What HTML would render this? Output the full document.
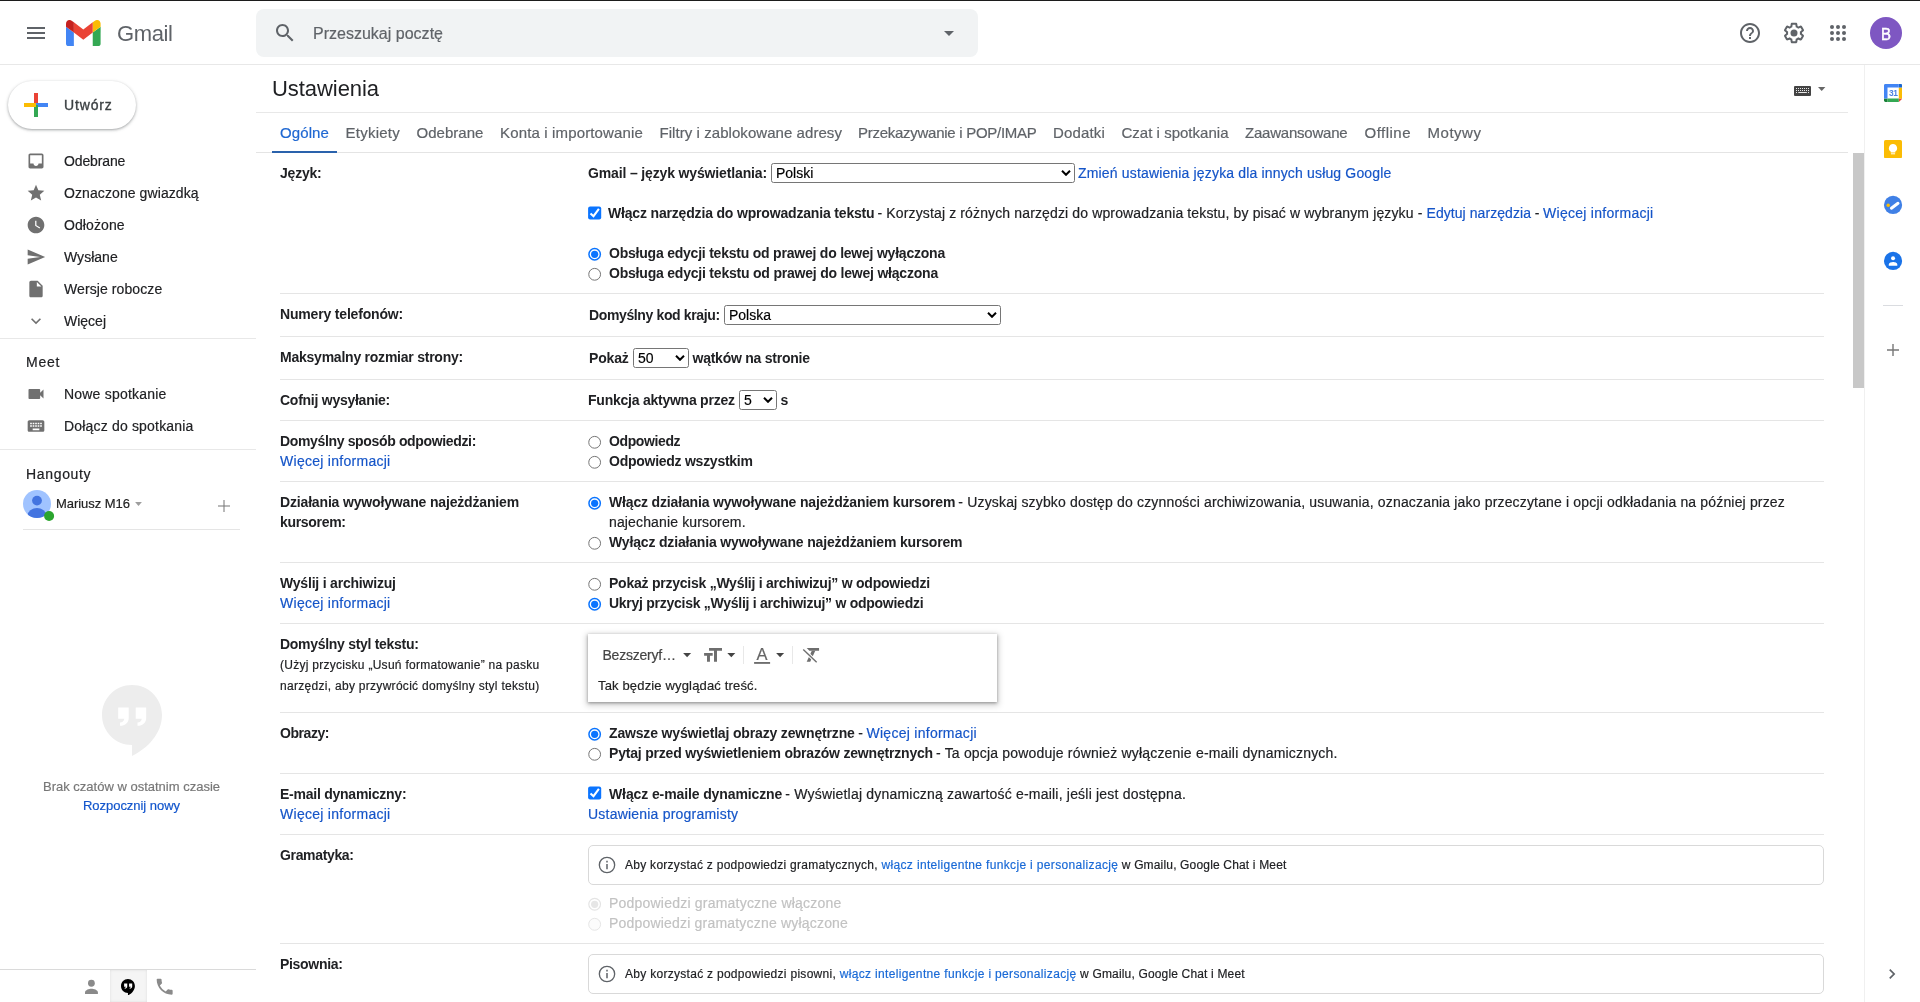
<!DOCTYPE html>
<html lang="pl">
<head>
<meta charset="utf-8">
<title>Ustawienia - Gmail</title>
<style>
html,body{margin:0;padding:0;}
body{width:1920px;height:1002px;position:relative;overflow:hidden;background:#fff;font-family:"Liberation Sans",sans-serif;color:#202124;}
.t{position:absolute;white-space:nowrap;font-family:"Liberation Sans",sans-serif;}
.a{position:absolute;}
.hl{position:absolute;height:1px;background:#e4e4e4;}
.row{position:absolute;left:280px;width:1544px;height:1px;background:#e5e5e5;}
.ic{position:absolute;fill:#5f6368;}
.sel{position:absolute;box-sizing:border-box;border:1px solid #767676;border-radius:2.5px;background:#fff;}
.sel svg{position:absolute;right:3px;top:50%;margin-top:-3px;}
.rad{position:absolute;box-sizing:border-box;width:13px;height:13px;border-radius:50%;border:1px solid #767676;background:#fff;}
.rad.on{border:1.5px solid #0075ff;}
.rad.on:after{content:"";position:absolute;left:1.300px;top:1.300px;width:7.400px;height:7.400px;border-radius:50%;background:#0075ff;}
.rad.dis{border-color:#d9d9d9;background:#fbfbfb;}
.rad.dis.on{border:1.5px solid #d4d4d4;}
.rad.dis.on:after{background:#d4d4d4;}
.chk{position:absolute;width:13px;height:13px;border-radius:2px;background:#0075ff;}
.info{position:absolute;box-sizing:border-box;left:588px;width:1236px;height:40px;border:1px solid #d9d9d9;border-radius:5px;background:#fff;}
.pre{white-space:pre;}
.avB{width:32px;text-align:center;font-weight:400;transform:scaleX(.88);-webkit-text-stroke:0.5px #fff;}
.nv{fill:#707070;}
.md{-webkit-text-stroke:0.350px currentColor;}
.md2{-webkit-text-stroke:0.200px currentColor;}
#texts{position:absolute;left:0;top:0;width:1920px;height:1002px;will-change:transform;}
.r{-webkit-text-stroke:0.180px currentColor;}

</style>
</head>
<body>
<!-- top chrome line + header -->
<div class="a" style="left:0;top:0;width:1920px;height:1px;background:#1c1c1c"></div>
<div class="hl" style="left:0;top:64px;width:1920px;background:#e8e8e8"></div>
<svg class="ic" style="left:24px;top:21px" width="24" height="24" viewBox="0 0 24 24"><path d="M3 18h18v-2H3v2zm0-5h18v-2H3v2zm0-7v2h18V6H3z"/></svg>
<svg class="a" style="left:66px;top:20px" width="34.600" height="26" viewBox="52 42 88 66" preserveAspectRatio="none"><path fill="#4285f4" d="M58 108h14V74L52 59v43c0 3.32 2.69 6 6 6"/><path fill="#34a853" d="M120 108h14c3.32 0 6-2.69 6-6V59l-20 15"/><path fill="#fbbc04" d="M120 48v26l20-15v-8c0-7.42-8.47-11.65-14.4-7.2"/><path fill="#ea4335" d="M72 74V48l24 18 24-18v26L96 92"/><path fill="#c5221f" d="M52 51v8l20 15V48l-5.6-4.2c-5.94-4.45-14.4-.22-14.4 7.2"/></svg>
<div class="a" style="left:256px;top:9px;width:722px;height:48px;border-radius:8px;background:#f1f3f4"></div>
<svg class="ic" style="left:273px;top:21px" width="24" height="24" viewBox="0 0 24 24"><path d="M15.5 14h-.79l-.28-.27C15.41 12.59 16 11.11 16 9.5 16 5.91 13.09 3 9.5 3S3 5.91 3 9.5 5.91 16 9.5 16c1.61 0 3.09-.59 4.23-1.57l.27.28v.79l5 4.99L20.49 19l-4.99-5zm-6 0C7.01 14 5 11.99 5 9.5S7.01 5 9.5 5 14 7.01 14 9.5 11.99 14 9.5 14z"/></svg>
<svg class="ic" style="left:937px;top:21px" width="24" height="24" viewBox="0 0 24 24"><path d="M7 10l5 5 5-5z"/></svg>
<svg class="ic" style="left:1738px;top:21px" width="24" height="24" viewBox="0 0 24 24"><path d="M11 18h2v-2h-2v2zm1-16C6.48 2 2 6.48 2 12s4.48 10 10 10 10-4.48 10-10S17.52 2 12 2zm0 18c-4.41 0-8-3.59-8-8s3.59-8 8-8 8 3.59 8 8-3.59 8-8 8zm0-14c-2.21 0-4 1.79-4 4h2c0-1.1.9-2 2-2s2 .9 2 2c0 2-3 1.75-3 5h2c0-2.25 3-2.5 3-5 0-2.21-1.79-4-4-4z"/></svg>
<svg class="ic" style="left:1782px;top:21px" width="24" height="24" viewBox="0 0 24 24"><path d="M13.85 22.25h-3.7c-.74 0-1.36-.54-1.45-1.27l-.27-1.89c-.27-.14-.53-.29-.79-.46l-1.8.72c-.7.26-1.47-.03-1.81-.65L2.2 15.53c-.35-.66-.2-1.44.36-1.88l1.53-1.19c-.01-.15-.02-.3-.02-.46 0-.15.01-.31.02-.46l-1.52-1.19c-.59-.45-.74-1.26-.37-1.88l1.85-3.19c.34-.62 1.11-.9 1.79-.63l1.81.73c.26-.17.52-.32.78-.46l.27-1.91c.09-.7.71-1.25 1.44-1.25h3.7c.74 0 1.36.54 1.45 1.27l.27 1.89c.27.14.53.29.79.46l1.8-.72c.71-.26 1.48.03 1.82.65l1.84 3.18c.36.66.2 1.44-.36 1.88l-1.52 1.19c.01.15.02.3.02.46s-.01.31-.02.46l1.52 1.19c.56.45.72 1.23.37 1.86l-1.86 3.22c-.34.62-1.11.9-1.8.63l-1.8-.72c-.26.17-.52.32-.78.46l-.27 1.91c-.1.68-.72 1.22-1.46 1.22zm-3.23-2h2.76l.37-2.55.53-.22c.44-.18.88-.44 1.34-.78l.45-.34 2.38.96 1.38-2.4-2.03-1.58.07-.56c.03-.26.06-.51.06-.78s-.03-.53-.06-.78l-.07-.56 2.03-1.58-1.39-2.4-2.39.96-.45-.35c-.42-.32-.87-.58-1.33-.77l-.52-.22-.37-2.55h-2.76l-.37 2.55-.53.21c-.44.19-.88.44-1.34.79l-.45.33-2.38-.95-1.39 2.39 2.03 1.58-.07.56a7 7 0 0 0-.06.79c0 .26.02.53.06.78l.07.56-2.03 1.58 1.38 2.4 2.39-.96.45.35c.43.33.86.58 1.33.77l.53.22.38 2.55z"/><circle cx="12" cy="12" r="3.5"/></svg>
<svg class="ic" style="left:1826px;top:21px" width="24" height="24" viewBox="0 0 24 24"><circle cx="6" cy="6" r="2"/><circle cx="12" cy="6" r="2"/><circle cx="18" cy="6" r="2"/><circle cx="6" cy="12" r="2"/><circle cx="12" cy="12" r="2"/><circle cx="18" cy="12" r="2"/><circle cx="6" cy="18" r="2"/><circle cx="12" cy="18" r="2"/><circle cx="18" cy="18" r="2"/></svg>
<div class="a" style="left:1870px;top:17px;width:32px;height:32px;border-radius:50%;background:#7e57c2"></div>

<!-- left sidebar -->
<div class="a" style="left:8px;top:81px;width:128px;height:48px;border-radius:24px;background:#fff;box-shadow:0 1px 2px 0 rgba(60,64,67,.3),0 1px 3px 1px rgba(60,64,67,.15)"></div>
<svg class="a" style="left:24px;top:93px" width="24" height="24" viewBox="0 0 24 24"><path fill="#ea4335" d="M10 0h4v10h-4z"/><path fill="#34a853" d="M10 14h4v10h-4z"/><path fill="#fbbc04" d="M0 10h10v4H0z"/><path fill="#4285f4" d="M14 10h10v4H14z"/><path fill="#ea4335" d="M10 10h4v2h-4z"/><path fill="#4285f4" d="M12 10h2v4h-2z"/><path fill="#34a853" d="M10 12h4v2h-4z"/><path fill="#fbbc04" d="M10 10h2v4h-2z"/></svg>
<svg class="ic nv" style="left:26px;top:151px" width="20" height="20" viewBox="0 0 24 24"><path d="M19 3H4.99c-1.11 0-1.98.9-1.98 2L3 19c0 1.1.88 2 1.99 2H19c1.1 0 2-.9 2-2V5c0-1.1-.9-2-2-2zm0 12h-4c0 1.66-1.35 3-3 3s-3-1.34-3-3H4.99V5H19v10z"/></svg>
<svg class="ic nv" style="left:26px;top:183px" width="20" height="20" viewBox="0 0 24 24"><path d="M12 17.27L18.18 21l-1.64-7.03L22 9.24l-7.19-.61L12 2 9.19 8.63 2 9.24l5.46 4.73L5.82 21z"/></svg>
<svg class="ic nv" style="left:26px;top:215px" width="20" height="20" viewBox="0 0 24 24"><path d="M12 2C6.5 2 2 6.5 2 12s4.5 10 10 10 10-4.5 10-10S17.5 2 12 2zm4.2 14.2L11 13V7h1.5v5.2l4.5 2.7-.8 1.3z"/></svg>
<svg class="ic nv" style="left:26px;top:247px" width="20" height="20" viewBox="0 0 24 24"><path d="M2.01 21L23 12 2.01 3 2 10l15 2-15 2z"/></svg>
<svg class="ic nv" style="left:26px;top:279px" width="20" height="20" viewBox="0 0 24 24"><path d="M6 2c-1.1 0-1.99.9-1.99 2L4 20c0 1.1.89 2 1.99 2H18c1.1 0 2-.9 2-2V8l-6-6H6zm7 7V3.5L18.5 9H13z"/></svg>
<svg class="ic nv" style="left:26px;top:311px" width="20" height="20" viewBox="0 0 24 24"><path d="M16.59 8.59L12 13.17 7.41 8.59 6 10l6 6 6-6z"/></svg>
<div class="hl" style="left:0;top:338px;width:256px;background:#e8e8e8"></div>
<svg class="ic nv" style="left:26px;top:384px" width="20" height="20" viewBox="0 0 24 24"><path d="M17 10.5V7c0-.55-.45-1-1-1H4c-.55 0-1 .45-1 1v10c0 .55.45 1 1 1h12c.55 0 1-.45 1-1v-3.5l4 4v-11l-4 4z"/></svg>
<svg class="ic nv" style="left:26px;top:416px" width="20" height="20" viewBox="0 0 24 24"><path d="M20 5H4c-1.1 0-1.99.9-1.99 2L2 17c0 1.1.9 2 2 2h16c1.1 0 2-.9 2-2V7c0-1.1-.9-2-2-2zm-9 3h2v2h-2V8zm0 3h2v2h-2v-2zM8 8h2v2H8V8zm0 3h2v2H8v-2zm-1 2H5v-2h2v2zm0-3H5V8h2v2zm9 7H8v-2h8v2zm0-4h-2v-2h2v2zm0-3h-2V8h2v2zm3 3h-2v-2h2v2zm0-3h-2V8h2v2z"/></svg>
<div class="hl" style="left:0;top:449px;width:256px;background:#e8e8e8"></div>
<!-- hangouts avatar -->
<svg class="a" style="left:23px;top:490px" width="28" height="28" viewBox="0 0 28 28"><defs><clipPath id="avc"><circle cx="14" cy="14" r="14"/></clipPath></defs><circle cx="14" cy="14" r="14" fill="#a0c3ff"/><g clip-path="url(#avc)" fill="#4374e0"><circle cx="14" cy="10.6" r="4.9"/><ellipse cx="14" cy="25.300" rx="9.300" ry="7.200"/></g></svg>
<svg class="a" style="left:43px;top:510px" width="12" height="12" viewBox="0 0 12 12"><circle cx="6.100" cy="6" r="5" fill="#2ba52e"/></svg>
<svg class="a" style="left:134px;top:498px" width="10" height="10" viewBox="0 0 10 10"><path fill="#9e9e9e" d="M1.100 3.900h6.800L4.500 8z"/></svg>
<svg class="a" style="left:218px;top:500px" width="12" height="12" viewBox="0 0 12 12"><path fill="#757575" d="M5.5 0h1v5.5H12v1H6.5V12h-1V6.500H0v-1h5.500z"/></svg>
<div class="hl" style="left:23px;top:529px;width:217px;background:#e5e5e5"></div>
<!-- hangouts bubble -->
<svg class="a" style="left:102px;top:685px" width="60" height="71" viewBox="0 0 60 71"><path fill="#ededed" d="M30 0C13.400 0 0 13.400 0 30c0 16.600 13.400 30 30 30v10.900c16-7.500 30-23 30-40.900C60 13.400 46.600 0 30 0z"/><path fill="#fff" d="M16.200 22.400H26.700V33C26.700 37.500 23.500 40.800 18 40.800V37.600C20.500 37.400 22 35.800 22.300 33.700H16.200ZM33.700 22.400H44.200V33C44.200 37.500 41 40.800 35.500 40.800V37.600C38 37.400 39.500 35.800 39.800 33.700H33.700Z"/></svg>
<div class="hl" style="left:0;top:969px;width:256px;background:#dadada"></div>
<div class="a" style="left:110px;top:970px;width:37px;height:32px;background:#f5f5f5;box-shadow:inset 0 0 3px rgba(0,0,0,.1)"></div>
<svg class="a" style="left:84px;top:978px" width="16" height="18" viewBox="84 978 16 18"><circle cx="91.400" cy="983.250" r="3.400" fill="#8a8a8a"/><path fill="#8a8a8a" d="M85 994v-1.600c0-2.600 4.300-3.700 6.450-3.700s6.450 1.100 6.450 3.700v1.600z"/></svg>
<svg class="a" style="left:121.100px;top:978.800px" width="13.900" height="16.450" viewBox="0 0 60 71"><path fill="#000" d="M30 0C13.400 0 0 13.400 0 30c0 16.600 13.400 30 30 30v10.900c16-7.500 30-23 30-40.900C60 13.400 46.600 0 30 0z"/><path fill="#fff" d="M13.500 19.900H27V32.500C27 38 23 41.800 16 41.800V37.800C19 37.500 21 35.800 21.500 33.400H13.500ZM34.900 19.900H48.400V32.500C48.400 38 44.400 41.800 37.400 41.800V37.800C40.400 37.500 42.400 35.800 42.900 33.400H34.900Z"/></svg>
<svg class="a" style="left:154.200px;top:976.300px" width="21.300" height="21.300" viewBox="0 0 24 24"><path fill="#8a8a8a" d="M6.620 10.790c1.440 2.830 3.760 5.140 6.590 6.590l2.200-2.200c.27-.27.67-.36 1.020-.24 1.120.37 2.330.57 3.570.57.550 0 1 .45 1 1V20c0 .55-.45 1-1 1-9.390 0-17-7.610-17-17 0-.55.450-1 1-1h3.500c.55 0 1 .45 1 1 0 1.250.2 2.450.57 3.570.11.350.03.740-.25 1.020l-2.200 2.200z"/></svg>

<!-- main -->
<div class="hl" style="left:256px;top:112px;width:1592px;background:#e8e8e8"></div>
<div class="hl" style="left:256px;top:152px;width:1592px;background:#e4e4e4"></div>
<div class="a" style="left:272px;top:151px;width:65px;height:2px;background:#2a62ac"></div>
<svg class="a" style="left:1794px;top:86px" width="17" height="10" viewBox="0 0 17 10"><rect x="0" y="0" width="17" height="10" rx="1" fill="#444"/><g fill="#e8e8e8"><rect x="2" y="2" width="1" height="1"/><rect x="2" y="4" width="1" height="1"/><rect x="4" y="2" width="1" height="1"/><rect x="4" y="4" width="1" height="1"/><rect x="6" y="2" width="1" height="1"/><rect x="6" y="4" width="1" height="1"/><rect x="8" y="2" width="1" height="1"/><rect x="8" y="4" width="1" height="1"/><rect x="10" y="2" width="1" height="1"/><rect x="10" y="4" width="1" height="1"/><rect x="12" y="2" width="1" height="1"/><rect x="12" y="4" width="1" height="1"/><rect x="14" y="2" width="1" height="1"/><rect x="14" y="4" width="1" height="1"/><rect x="2" y="6" width="1" height="1"/><rect x="4.250" y="6" width="8.600" height="1"/><rect x="14" y="6" width="1" height="1"/></g></svg>
<svg class="a" style="left:1818.200px;top:86.600px" width="7.400" height="4" viewBox="0 0 7.400 4"><path fill="#666" d="M0 0h7.400L3.700 4z"/></svg>
<!-- scrollbar -->
<div class="a" style="left:1853px;top:153px;width:11px;height:235px;background:#c8c8c8"></div>
<!-- right panel -->
<div class="a" style="left:1864px;top:65px;width:1px;height:937px;background:#f0f0f0"></div>
<svg class="a" style="left:1883.500px;top:84px;will-change:transform" width="18.400" height="18" viewBox="0 0 184 180"><path fill="#fff" d="M35 35h113v110H35z"/><path fill="#ea4335" d="M148 180l36-35h-36z"/><path fill="#fbbc04" d="M148 35h36v110h-36z"/><path fill="#34a853" d="M35 145h113v35H35z"/><path fill="#188038" d="M0 145v21c0 7.700 6.300 14 14 14h21v-35z"/><path fill="#1967d2" d="M184 35V14c0-7.700-6.300-14-14-14h-22v35z"/><path fill="#4285f4" d="M14 0C6.300 0 0 6.300 0 14v131h35V35h113V0z"/><text x="92" y="119" font-family="Liberation Sans, sans-serif" font-size="84" font-weight="700" fill="#4d7fe0" text-anchor="middle" letter-spacing="-4">31</text></svg>
<svg class="a" style="left:1884px;top:140px" width="18" height="18.400" viewBox="0 0 18 18.400"><rect width="18" height="18.400" rx="1.600" fill="#fbbc04"/><path fill="#fff" d="M9 4a4.100 4.100 0 0 0-2.300 7.500v.900h4.600v-.900A4.100 4.100 0 0 0 9 4z"/><rect x="6.900" y="13.100" width="4.200" height="1.300" fill="#fef0c3"/></svg>
<svg class="a" style="left:1883px;top:195px" width="20" height="20" viewBox="0 0 20 20"><circle cx="10.050" cy="9.950" r="9.100" fill="#4080e6"/><path d="M8.400 13.200l6.600-4.900" stroke="#fff" stroke-width="3" stroke-linecap="round"/><circle cx="5.200" cy="10.200" r="1.700" fill="#fbbc04"/></svg>
<svg class="a" style="left:1883px;top:251px" width="20" height="20" viewBox="0 0 20 20"><circle cx="10.050" cy="9.950" r="9.100" fill="#1a73e8"/><circle cx="10.050" cy="7.200" r="2" fill="#fff"/><path fill="#fff" d="M5.800 14.700v-1.100c0-1.800 2.700-2.500 4.250-2.500s4.250.700 4.250 2.500v1.100z"/></svg>
<div class="hl" style="left:1883px;top:305px;width:20px;background:#dadce0"></div>
<svg class="a" style="left:1887px;top:344px" width="12" height="12" viewBox="0 0 12 12"><path fill="#777" d="M5.300 0h1.400v5.300H12v1.400H6.700V12H5.300V6.700H0V5.300h5.300z"/></svg>
<svg class="a" style="left:1882px;top:964px" width="20" height="20" viewBox="0 0 24 24"><path fill="#5f6368" d="M8.590 16.590L13.170 12 8.590 7.410 10 6l6 6-6 6z"/></svg>

<!-- settings rows -->
<div class="row" style="top:293px"></div>
<div class="row" style="top:336px"></div>
<div class="row" style="top:379px"></div>
<div class="row" style="top:420px"></div>
<div class="row" style="top:481px"></div>
<div class="row" style="top:562px"></div>
<div class="row" style="top:623px"></div>
<div class="row" style="top:712px"></div>
<div class="row" style="top:773px"></div>
<div class="row" style="top:834px"></div>
<div class="row" style="top:943px"></div>

<!-- selects -->
<div class="sel" style="left:771px;top:163px;width:304px;height:20px"><svg width="10" height="6" viewBox="0 0 10 6"><path d="M1 .800l4 4 4-4" fill="none" stroke="#000" stroke-width="2"/></svg></div>
<div class="sel" style="left:724px;top:305px;width:277px;height:20px"><svg width="10" height="6" viewBox="0 0 10 6"><path d="M1 .800l4 4 4-4" fill="none" stroke="#000" stroke-width="2"/></svg></div>
<div class="sel" style="left:633px;top:348px;width:56px;height:20px"><svg width="10" height="6" viewBox="0 0 10 6"><path d="M1 .800l4 4 4-4" fill="none" stroke="#000" stroke-width="2"/></svg></div>
<div class="sel" style="left:739px;top:390px;width:38px;height:20px"><svg width="10" height="6" viewBox="0 0 10 6"><path d="M1 .800l4 4 4-4" fill="none" stroke="#000" stroke-width="2"/></svg></div>

<!-- checkboxes -->
<svg class="a" style="left:587px;top:205px" width="16" height="16" viewBox="0 0 16 16"><rect x="1.100" y="1.400" width="13.100" height="13.200" rx="2" fill="#0a74ff"/><path d="M3.500 8.400l3 2.800 5.400-7.300" fill="none" stroke="#fff" stroke-width="2.100"/></svg>
<svg class="a" style="left:587px;top:785px" width="16" height="16" viewBox="0 0 16 16"><rect x="1.100" y="1.400" width="13.100" height="13.200" rx="2" fill="#0a74ff"/><path d="M3.500 8.400l3 2.800 5.400-7.300" fill="none" stroke="#fff" stroke-width="2.100"/></svg>
<!-- radios -->
<svg class="a" style="left:587px;top:246px" width="16" height="16" viewBox="0 0 16 16"><circle cx="7.65" cy="8.30" r="5.700" fill="#fff" stroke="#0a74ff" stroke-width="1.500"/><circle cx="7.65" cy="8.30" r="3.600" fill="#0a74ff"/></svg>
<svg class="a" style="left:587px;top:266px" width="16" height="16" viewBox="0 0 16 16"><circle cx="7.65" cy="8.30" r="5.900" fill="#fff" stroke="#767676" stroke-width="1"/></svg>
<svg class="a" style="left:587px;top:434px" width="16" height="16" viewBox="0 0 16 16"><circle cx="7.65" cy="8.30" r="5.900" fill="#fff" stroke="#767676" stroke-width="1"/></svg>
<svg class="a" style="left:587px;top:454px" width="16" height="16" viewBox="0 0 16 16"><circle cx="7.65" cy="8.30" r="5.900" fill="#fff" stroke="#767676" stroke-width="1"/></svg>
<svg class="a" style="left:587px;top:495px" width="16" height="16" viewBox="0 0 16 16"><circle cx="7.65" cy="8.30" r="5.700" fill="#fff" stroke="#0a74ff" stroke-width="1.500"/><circle cx="7.65" cy="8.30" r="3.600" fill="#0a74ff"/></svg>
<svg class="a" style="left:587px;top:535px" width="16" height="16" viewBox="0 0 16 16"><circle cx="7.65" cy="8.30" r="5.900" fill="#fff" stroke="#767676" stroke-width="1"/></svg>
<svg class="a" style="left:587px;top:576px" width="16" height="16" viewBox="0 0 16 16"><circle cx="7.65" cy="8.30" r="5.900" fill="#fff" stroke="#767676" stroke-width="1"/></svg>
<svg class="a" style="left:587px;top:596px" width="16" height="16" viewBox="0 0 16 16"><circle cx="7.65" cy="8.30" r="5.700" fill="#fff" stroke="#0a74ff" stroke-width="1.500"/><circle cx="7.65" cy="8.30" r="3.600" fill="#0a74ff"/></svg>
<svg class="a" style="left:587px;top:726px" width="16" height="16" viewBox="0 0 16 16"><circle cx="7.65" cy="8.30" r="5.700" fill="#fff" stroke="#0a74ff" stroke-width="1.500"/><circle cx="7.65" cy="8.30" r="3.600" fill="#0a74ff"/></svg>
<svg class="a" style="left:587px;top:746px" width="16" height="16" viewBox="0 0 16 16"><circle cx="7.65" cy="8.30" r="5.900" fill="#fff" stroke="#767676" stroke-width="1"/></svg>
<svg class="a" style="left:587px;top:896px" width="16" height="16" viewBox="0 0 16 16"><circle cx="7.65" cy="8.30" r="5.850" fill="#fff" stroke="#e4e4e4" stroke-width="1.200"/><circle cx="7.65" cy="8.30" r="3.600" fill="#e6e6e6"/></svg>
<svg class="a" style="left:587px;top:916px" width="16" height="16" viewBox="0 0 16 16"><circle cx="7.65" cy="8.30" r="5.950" fill="#fcfcfc" stroke="#e6e6e6" stroke-width="1"/></svg>

<!-- rich text box -->
<div class="a" style="left:588px;top:634px;width:409px;height:68px;background:#fff;box-shadow:0 1px 3px 0 rgba(0,0,0,.36),0 2px 6px 2px rgba(0,0,0,.15)"></div>
<svg class="a" style="left:680px;top:640px" width="148" height="30" viewBox="680 640 148 30">
<path fill="#444" d="M683.100 653h8l-4 4.200z"/>
<path fill="#6e6e6e" d="M709.060 648.100H722v2.700h-5v11.060h-3V650.800h-4.940zM704.100 653.060h8.600v2.640h-2.740v6.160H707v-6.160h-2.900z"/>
<path fill="#444" d="M727.300 653h8l-4 4.200z"/>
<rect x="743" y="646" width="1" height="18" fill="#e8e8e8"/>
<rect x="754.100" y="662" width="16" height="1.860" fill="#6e6e6e"/>
<path fill="#444" d="M776.100 653h8l-4 4.200z"/>
<rect x="792" y="646" width="1" height="18" fill="#e8e8e8"/>
<path fill="#6e6e6e" d="M806.700 648.100h12.370v2.700H809.400z"/>
<path fill="#6e6e6e" d="M811.800 650.800h3.500l-5.100 11.060h-3.500z"/>
<path d="M803.250 649.600l13.400 12.700" stroke="#fff" stroke-width="3.400" fill="none"/>
<path d="M803.250 649.600l13.400 12.700" stroke="#6e6e6e" stroke-width="1.400" fill="none"/>
</svg>

<!-- info boxes -->
<div class="info" style="top:845px"></div>
<div class="info" style="top:954px"></div>
<svg class="a" style="left:597px;top:855px" width="20" height="20" viewBox="0 0 24 24"><circle cx="12" cy="12" r="9.200" fill="none" stroke="#5f6368" stroke-width="1.600"/><path fill="#5f6368" d="M11.100 7h1.800v1.900h-1.800zm0 3.900h1.800V17h-1.800z"/></svg>
<svg class="a" style="left:597px;top:964px" width="20" height="20" viewBox="0 0 24 24"><circle cx="12" cy="12" r="9.200" fill="none" stroke="#5f6368" stroke-width="1.600"/><path fill="#5f6368" d="M11.100 7h1.800v1.900h-1.800zm0 3.900h1.800V17h-1.800z"/></svg>

<div id="texts">
<span class="t nr" style="left:117px;top:19.8px;font-size:22px;line-height:28px;color:#5f6368;letter-spacing:-0.391px;">Gmail</span>
<span class="t r" style="left:313px;top:22px;font-size:16px;line-height:24px;color:#5f6368;letter-spacing:0.009px;">Przeszukaj pocztę</span>
<span class="t avB" style="left:1870px;top:22.7px;font-size:17px;line-height:24px;color:#fff;">B</span>
<span class="t md" style="left:64px;top:95px;font-size:14px;line-height:20px;color:#3c4043;letter-spacing:0.840px;">Utwórz</span>
<span class="t r" style="left:64px;top:151px;font-size:14px;line-height:20px;letter-spacing:-0.123px;">Odebrane</span>
<span class="t r" style="left:64px;top:183px;font-size:14px;line-height:20px;letter-spacing:0.090px;">Oznaczone gwiazdką</span>
<span class="t r" style="left:64px;top:215px;font-size:14px;line-height:20px;letter-spacing:0.095px;">Odłożone</span>
<span class="t r" style="left:64px;top:247px;font-size:14px;line-height:20px;letter-spacing:0.020px;">Wysłane</span>
<span class="t r" style="left:64px;top:279px;font-size:14px;line-height:20px;letter-spacing:0.092px;">Wersje robocze</span>
<span class="t r" style="left:64px;top:311px;font-size:14px;line-height:20px;">Więcej</span>
<span class="t md2" style="left:26px;top:352px;font-size:14px;line-height:20px;letter-spacing:0.794px;">Meet</span>
<span class="t r" style="left:64px;top:384px;font-size:14px;line-height:20px;letter-spacing:0.205px;">Nowe spotkanie</span>
<span class="t r" style="left:64px;top:416px;font-size:14px;line-height:20px;letter-spacing:0.180px;">Dołącz do spotkania</span>
<span class="t md2" style="left:26px;top:464px;font-size:14px;line-height:20px;letter-spacing:0.670px;">Hangouty</span>
<span class="t r" style="left:56px;top:493.5px;font-size:13px;line-height:20px;color:#222;letter-spacing:-0.038px;">Mariusz M16</span>
<span class="t r" style="left:43px;top:777px;font-size:13px;line-height:20px;color:#777;">Brak czatów w ostatnim czasie</span>
<span class="t r" style="left:83px;top:795.5px;font-size:13px;line-height:20px;color:#1155cc;letter-spacing:-0.036px;">Rozpocznij nowy</span>
<span class="t nr" style="left:272px;top:75px;font-size:22px;line-height:28px;letter-spacing:-0.061px;">Ustawienia</span>
<span class="t md2" style="left:280px;top:123px;font-size:15px;line-height:20px;color:#2068d2;letter-spacing:0.104px;">Ogólne</span>
<span class="t md2" style="left:345.5px;top:123px;font-size:15px;line-height:20px;color:#5f6368;letter-spacing:0.248px;">Etykiety</span>
<span class="t md2" style="left:416.5px;top:123px;font-size:15px;line-height:20px;color:#5f6368;letter-spacing:0.035px;">Odebrane</span>
<span class="t md2" style="left:500px;top:123px;font-size:15px;line-height:20px;color:#5f6368;letter-spacing:0.146px;">Konta i importowanie</span>
<span class="t md2" style="left:659.5px;top:123px;font-size:15px;line-height:20px;color:#5f6368;letter-spacing:0.058px;">Filtry i zablokowane adresy</span>
<span class="t md2" style="left:858px;top:123px;font-size:15px;line-height:20px;color:#5f6368;letter-spacing:-0.273px;">Przekazywanie i POP/IMAP</span>
<span class="t md2" style="left:1053px;top:123px;font-size:15px;line-height:20px;color:#5f6368;letter-spacing:0.163px;">Dodatki</span>
<span class="t md2" style="left:1121.5px;top:123px;font-size:15px;line-height:20px;color:#5f6368;letter-spacing:0.017px;">Czat i spotkania</span>
<span class="t md2" style="left:1245px;top:123px;font-size:15px;line-height:20px;color:#5f6368;letter-spacing:-0.215px;">Zaawansowane</span>
<span class="t md2" style="left:1364.5px;top:123px;font-size:15px;line-height:20px;color:#5f6368;letter-spacing:0.487px;">Offline</span>
<span class="t md2" style="left:1427.5px;top:123px;font-size:15px;line-height:20px;color:#5f6368;letter-spacing:0.526px;">Motywy</span>
<span class="t" style="left:280px;top:163px;font-size:14.0px;line-height:20px;font-weight:700;letter-spacing:-0.219px;">Język:</span>
<span class="t" style="left:588px;top:163px;font-size:14.0px;line-height:20px;font-weight:700;letter-spacing:-0.144px;">Gmail – język wyświetlania:</span>
<span class="t r" style="left:776px;top:163px;font-size:14px;line-height:20px;color:#000;">Polski</span>
<span class="t r" style="left:1078px;top:163px;font-size:14px;line-height:20px;color:#1555c8;letter-spacing:0.163px;">Zmień ustawienia języka dla innych usług Google</span>
<span class="t" style="left:608px;top:203px;font-size:14.0px;line-height:20px;font-weight:700;letter-spacing:-0.173px;">Włącz narzędzia do wprowadzania tekstu</span>
<span class="t pre r" style="left:873.5px;top:203px;font-size:14px;line-height:20px;letter-spacing:0.135px;"> - Korzystaj z różnych narzędzi do wprowadzania tekstu, by pisać w wybranym języku - </span>
<span class="t r" style="left:1426.5px;top:203px;font-size:14px;line-height:20px;color:#1555c8;letter-spacing:0.062px;">Edytuj narzędzia</span>
<span class="t pre r" style="left:1531px;top:203px;font-size:14px;line-height:20px;letter-spacing:-0.151px;"> - </span>
<span class="t r" style="left:1543px;top:203px;font-size:14px;line-height:20px;color:#1555c8;letter-spacing:0.276px;">Więcej informacji</span>
<span class="t" style="left:609px;top:243px;font-size:14.0px;line-height:20px;font-weight:700;letter-spacing:-0.220px;">Obsługa edycji tekstu od prawej do lewej wyłączona</span>
<span class="t" style="left:609px;top:263px;font-size:14.0px;line-height:20px;font-weight:700;letter-spacing:-0.208px;">Obsługa edycji tekstu od prawej do lewej włączona</span>
<span class="t" style="left:280px;top:304px;font-size:14.0px;line-height:20px;font-weight:700;letter-spacing:-0.177px;">Numery telefonów:</span>
<span class="t" style="left:589px;top:304.5px;font-size:14.0px;line-height:20px;font-weight:700;letter-spacing:-0.369px;">Domyślny kod kraju:</span>
<span class="t r" style="left:729px;top:305px;font-size:14px;line-height:20px;color:#000;">Polska</span>
<span class="t" style="left:280px;top:347px;font-size:14.0px;line-height:20px;font-weight:700;letter-spacing:-0.234px;">Maksymalny rozmiar strony:</span>
<span class="t" style="left:589px;top:348px;font-size:14.0px;line-height:20px;font-weight:700;letter-spacing:-0.154px;">Pokaż</span>
<span class="t r" style="left:638px;top:348px;font-size:14px;line-height:20px;color:#000;">50</span>
<span class="t" style="left:692.5px;top:348px;font-size:14.0px;line-height:20px;font-weight:700;letter-spacing:-0.239px;">wątków na stronie</span>
<span class="t" style="left:280px;top:390px;font-size:14.0px;line-height:20px;font-weight:700;letter-spacing:-0.256px;">Cofnij wysyłanie:</span>
<span class="t" style="left:588px;top:390px;font-size:14.0px;line-height:20px;font-weight:700;letter-spacing:-0.239px;">Funkcja aktywna przez</span>
<span class="t r" style="left:744px;top:390px;font-size:14px;line-height:20px;color:#000;">5</span>
<span class="t" style="left:780.5px;top:390px;font-size:14.0px;line-height:20px;font-weight:700;letter-spacing:-0.797px;">s</span>
<span class="t" style="left:280px;top:431px;font-size:14.0px;line-height:20px;font-weight:700;letter-spacing:-0.347px;">Domyślny sposób odpowiedzi:</span>
<span class="t r" style="left:280px;top:451px;font-size:14px;line-height:20px;color:#1555c8;letter-spacing:0.276px;">Więcej informacji</span>
<span class="t" style="left:609px;top:431px;font-size:14.0px;line-height:20px;font-weight:700;letter-spacing:-0.386px;">Odpowiedz</span>
<span class="t" style="left:609px;top:451px;font-size:14.0px;line-height:20px;font-weight:700;letter-spacing:-0.258px;">Odpowiedz wszystkim</span>
<span class="t" style="left:280px;top:492px;font-size:14.0px;line-height:20px;font-weight:700;letter-spacing:-0.161px;">Działania wywoływane najeżdżaniem</span>
<span class="t" style="left:280px;top:512px;font-size:14.0px;line-height:20px;font-weight:700;letter-spacing:-0.308px;">kursorem:</span>
<span class="t" style="left:609px;top:492px;font-size:14.0px;line-height:20px;font-weight:700;letter-spacing:-0.161px;">Włącz działania wywoływane najeżdżaniem kursorem</span>
<span class="t pre r" style="left:954.3px;top:492px;font-size:14px;line-height:20px;letter-spacing:0.162px;"> - Uzyskaj szybko dostęp do czynności archiwizowania, usuwania, oznaczania jako przeczytane i opcji odkładania na później przez</span>
<span class="t r" style="left:609px;top:512px;font-size:14px;line-height:20px;letter-spacing:0.142px;">najechanie kursorem.</span>
<span class="t" style="left:609px;top:532px;font-size:14.0px;line-height:20px;font-weight:700;letter-spacing:-0.166px;">Wyłącz działania wywoływane najeżdżaniem kursorem</span>
<span class="t" style="left:280px;top:573px;font-size:14.0px;line-height:20px;font-weight:700;letter-spacing:-0.198px;">Wyślij i archiwizuj</span>
<span class="t r" style="left:280px;top:593px;font-size:14px;line-height:20px;color:#1555c8;letter-spacing:0.276px;">Więcej informacji</span>
<span class="t" style="left:609px;top:573px;font-size:14.0px;line-height:20px;font-weight:700;letter-spacing:-0.243px;">Pokaż przycisk „Wyślij i archiwizuj” w odpowiedzi</span>
<span class="t" style="left:609px;top:593px;font-size:14.0px;line-height:20px;font-weight:700;letter-spacing:-0.265px;">Ukryj przycisk „Wyślij i archiwizuj” w odpowiedzi</span>
<span class="t" style="left:280px;top:634px;font-size:14.0px;line-height:20px;font-weight:700;letter-spacing:-0.291px;">Domyślny styl tekstu:</span>
<span class="t r" style="left:280px;top:655px;font-size:12px;line-height:20px;letter-spacing:0.275px;">(Użyj przycisku „Usuń formatowanie” na pasku</span>
<span class="t r" style="left:280px;top:676px;font-size:12px;line-height:20px;letter-spacing:0.292px;">narzędzi, aby przywrócić domyślny styl tekstu)</span>
<span class="t md2" style="left:602.5px;top:645px;font-size:14px;line-height:20px;color:#444;letter-spacing:-0.217px;">Bezszeryf…</span>
<span class="t r" style="left:756.5px;top:644.45px;font-size:16.5px;line-height:20px;color:#666;">A</span>
<span class="t r" style="left:598px;top:676px;font-size:13px;line-height:20px;color:#222;letter-spacing:0.159px;">Tak będzie wyglądać treść.</span>
<span class="t" style="left:280px;top:723px;font-size:14.0px;line-height:20px;font-weight:700;letter-spacing:-0.446px;">Obrazy:</span>
<span class="t" style="left:609px;top:723px;font-size:14.0px;line-height:20px;font-weight:700;letter-spacing:-0.160px;">Zawsze wyświetlaj obrazy zewnętrzne</span>
<span class="t pre r" style="left:854.7px;top:723px;font-size:14px;line-height:20px;letter-spacing:-0.218px;"> - </span>
<span class="t r" style="left:866.5px;top:723px;font-size:14px;line-height:20px;color:#1555c8;letter-spacing:0.270px;">Więcej informacji</span>
<span class="t" style="left:609px;top:743px;font-size:14.0px;line-height:20px;font-weight:700;letter-spacing:-0.197px;">Pytaj przed wyświetleniem obrazów zewnętrznych</span>
<span class="t pre r" style="left:931.9px;top:743px;font-size:14px;line-height:20px;letter-spacing:0.187px;"> - Ta opcja powoduje również wyłączenie e-maili dynamicznych.</span>
<span class="t" style="left:280px;top:784px;font-size:14.0px;line-height:20px;font-weight:700;letter-spacing:-0.245px;">E-mail dynamiczny:</span>
<span class="t r" style="left:280px;top:804px;font-size:14px;line-height:20px;color:#1555c8;letter-spacing:0.276px;">Więcej informacji</span>
<span class="t" style="left:609px;top:784px;font-size:14.0px;line-height:20px;font-weight:700;letter-spacing:-0.110px;">Włącz e-maile dynamiczne</span>
<span class="t pre r" style="left:781.2px;top:784px;font-size:14px;line-height:20px;letter-spacing:0.200px;"> - Wyświetlaj dynamiczną zawartość e-maili, jeśli jest dostępna.</span>
<span class="t r" style="left:588px;top:804px;font-size:14px;line-height:20px;color:#1555c8;letter-spacing:0.214px;">Ustawienia programisty</span>
<span class="t" style="left:280px;top:845px;font-size:14.0px;line-height:20px;font-weight:700;letter-spacing:-0.345px;">Gramatyka:</span>
<span class="t pre r" style="left:625px;top:855px;font-size:12px;line-height:20px;letter-spacing:0.273px;">Aby korzystać z podpowiedzi gramatycznych, </span>
<span class="t r" style="left:881.5px;top:855px;font-size:12px;line-height:20px;color:#1969d6;letter-spacing:0.341px;">włącz inteligentne funkcje i personalizację</span>
<span class="t pre r" style="left:1118.3px;top:855px;font-size:12px;line-height:20px;letter-spacing:0.165px;"> w Gmailu, Google Chat i Meet</span>
<span class="t r" style="left:609px;top:893px;font-size:14px;line-height:20px;color:#c2c2c2;letter-spacing:0.213px;">Podpowiedzi gramatyczne włączone</span>
<span class="t r" style="left:609px;top:913px;font-size:14px;line-height:20px;color:#c2c2c2;letter-spacing:0.194px;">Podpowiedzi gramatyczne wyłączone</span>
<span class="t" style="left:280px;top:954px;font-size:14.0px;line-height:20px;font-weight:700;letter-spacing:-0.307px;">Pisownia:</span>
<span class="t pre r" style="left:625px;top:964px;font-size:12px;line-height:20px;letter-spacing:0.287px;">Aby korzystać z podpowiedzi pisowni, </span>
<span class="t r" style="left:839.7px;top:964px;font-size:12px;line-height:20px;color:#1969d6;letter-spacing:0.344px;">włącz inteligentne funkcje i personalizację</span>
<span class="t pre r" style="left:1076.6px;top:964px;font-size:12px;line-height:20px;letter-spacing:0.165px;"> w Gmailu, Google Chat i Meet</span>
</div>
</body>
</html>
